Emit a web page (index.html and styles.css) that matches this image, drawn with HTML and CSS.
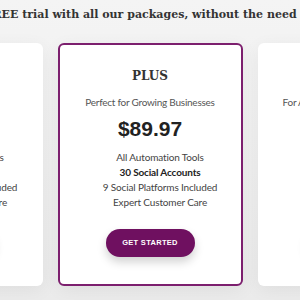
FILE: index.html
```html
<!DOCTYPE html>
<html lang="en">
<head>
    <meta charset="UTF-8">
    <meta name="viewport" content="width=device-width, initial-scale=1.0">
    <title>Pricing</title>
    <link rel="stylesheet" href="styles.css">
</head>
<body>

    <div class="intro">
        <p>Enjoy a FREE trial with all our packages, without the need for a card.</p>
    </div>

    <div class="plans">
        <div class="plan">
            <h2>BASIC</h2>
            <p class="tagline">For Starters</p>
            <div class="price">$49.97</div>
            <ul>
                <li>All Automation Tools</li>
                <li><b>10 Accounts</b></li>
                <li>5 Social Platforms Included</li>
                <li>Expert Customer Care</li>
            </ul>
            <a class="btn" href="#">Get Started</a>
        </div>

        <div class="plan featured">
            <h2>PLUS</h2>
            <p class="tagline">Perfect for Growing Businesses</p>
            <div class="price">$89.97</div>
            <ul>
                <li>All Automation Tools</li>
                <li><b>30 Social Accounts</b></li>
                <li>9 Social Platforms Included</li>
                <li>Expert Customer Care</li>
            </ul>
            <a class="btn" href="#">Get Started</a>
        </div>

        <div class="plan">
            <h2>PRO</h2>
            <p class="tagline">For Agencies &amp; Large Businesses</p>
            <div class="price">$149.97</div>
            <ul>
                <li>All Automation Tools</li>
                <li><b>60 Social Accounts</b></li>
                <li>9 Social Platforms Included</li>
                <li>Expert Customer Care</li>
            </ul>
            <a class="btn" href="#">Get Started</a>
        </div>
    </div>

</body>
</html>
```

FILE: styles.css
```css
body {
    margin: 0;
    font-family: Lato, "Liberation Sans", Arial, sans-serif;
    background: linear-gradient(#f4f4f4, #ebebeb);
    height: 300px;
    overflow: hidden;
}

/* Intro line */
.intro {
    display: flex;
    justify-content: center;
    height: 43px;
}

.intro p {
    margin: 5px 0 0;
    white-space: nowrap;
    font-family: "DejaVu Serif", Georgia, serif;
    font-size: 11px;
    font-weight: bold;
    line-height: 20px;
    color: #333;
}

/* Plans */
.plans {
    display: flex;
    justify-content: center;
    gap: 15px;
}

.plan {
    flex: 0 0 185px;
    box-sizing: border-box;
    height: 243px;
    padding: 24px 8px 0;
    background: #fff;
    border-radius: 6px;
    box-shadow: 0 4px 18px rgba(0, 0, 0, 0.06);
    text-align: center;
}

.plan.featured {
    border: 2px solid #7c1f6e;
    padding-top: 22px;
}

.plan h2 {
    margin: 0;
    font-family: "DejaVu Serif", Georgia, serif;
    font-size: 12px;
    line-height: 18px;
    color: #333;
}

.tagline {
    margin: 9px 0 0;
    font-size: 10px;
    letter-spacing: -0.25px;
    line-height: 16px;
    color: #555;
}

.price {
    margin-top: 5px;
    font-family: "Liberation Sans", Arial, sans-serif;
    font-size: 21px;
    line-height: 28px;
    font-weight: bold;
    color: #222;
}

.plan ul {
    list-style: none;
    margin: 7px 0 0;
    padding: 0 0 0 20px;
    font-size: 10px;
    letter-spacing: -0.15px;
    line-height: 15px;
    color: #444;
}

.plan ul b {
    color: #222;
}

.btn {
    display: inline-block;
    margin-top: 19px;
    width: 89px;
    height: 28px;
    line-height: 28px;
    border-radius: 14px;
    background-color: #6f1060;
    color: white;
    text-decoration: none;
    text-transform: uppercase;
    font-family: "Liberation Sans", Arial, sans-serif;
    font-size: 7.5px;
    font-weight: bold;
    letter-spacing: 0.3px;
    box-shadow: 0 5px 10px rgba(0, 0, 0, 0.18);
}
```
